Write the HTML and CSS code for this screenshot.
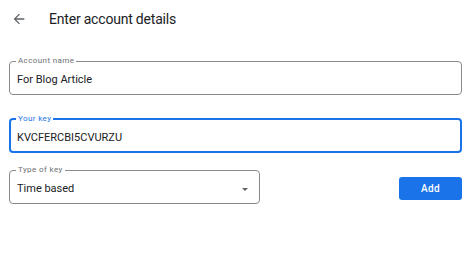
FILE: index.html
```html
<!DOCTYPE html>
<html lang="en">

<head>
    <meta charset="UTF-8" />
    <title>Enter account details</title>
    <link rel="stylesheet" href="styles.css">
</head>

<body>
    <!-- 顶部标题栏 -->
    <div class="top-bar">
        <a href="javascript:;" class="back">
            <svg viewBox="0 0 24 24" width="16" height="16">
                <path d="M20 11H7.83l5.59-5.59L12 4l-8 8 8 8 1.41-1.41L7.83 13H20v-2z" fill="currentColor" />
            </svg>
        </a>
        <h1 class="title">Enter account details</h1>
    </div>

    <!-- 表单 -->
    <div class="form">
        <fieldset class="field">
            <legend>Account name</legend>
            <div class="value">For Blog Article</div>
        </fieldset>

        <fieldset class="field focused">
            <legend>Your key</legend>
            <div class="value">KVCFERCBI5CVURZU</div>
        </fieldset>

        <div class="row">
            <fieldset class="field select">
                <legend>Type of key</legend>
                <div class="value">Time based</div>
                <span class="caret"></span>
            </fieldset>
            <a href="javascript:;" class="btn">Add</a>
        </div>
    </div>
</body>

</html>
```

FILE: styles.css
```css
* {
    margin: 0;
    padding: 0;
    box-sizing: border-box;
}

body {
    font-family: Roboto, "Liberation Sans", sans-serif;
    color: #202124;
    background: #fff;
}

.top-bar {
    display: flex;
    align-items: center;
    height: 38px;
    padding-left: 11px;
}

.top-bar .back {
    display: flex;
    color: #5f6368;
}

.top-bar .title {
    margin-left: 22px;
    font-size: 14px;
    font-weight: 400;
    letter-spacing: -0.2px;
    color: #202124;
}

.form {
    padding: 18px 11px 0 9px;
}

.field {
    position: relative;
    height: 39px;
    border: 1px solid #868a8f;
    border-radius: 4px;
    padding: 0 7px 0 6px;
}

.field + .field {
    margin-top: 19px;
}

.field legend {
    padding: 0 2px;
    font-size: 8px;
    line-height: 10px;
    letter-spacing: 0.4px;
    color: #6b6f74;
}

.field .value {
    padding-left: 1px;
    font-size: 11px;
    line-height: 14px;
    padding-top: 7px;
}

.field.focused {
    border: 2px solid #1a73e8;
    padding: 0 6px 0 5px;
}

.field.focused legend {
    color: #1a73e8;
}

.row {
    display: flex;
    align-items: center;
    justify-content: space-between;
    margin-top: 12px;
}

.field.select {
    width: 251px;
}

.caret {
    position: absolute;
    right: 11px;
    top: 13px;
    border-left: 3.5px solid transparent;
    border-right: 3.5px solid transparent;
    border-top: 3.5px solid #5f6368;
}

.btn {
    display: block;
    width: 63px;
    height: 23px;
    margin-top: 8px;
    background-color: #1a73e8;
    border-radius: 3px;
    color: #fff;
    font-size: 10px;
    font-weight: 500;
    line-height: 23px;
    text-align: center;
    text-decoration: none;
    letter-spacing: 0.3px;
}
```
